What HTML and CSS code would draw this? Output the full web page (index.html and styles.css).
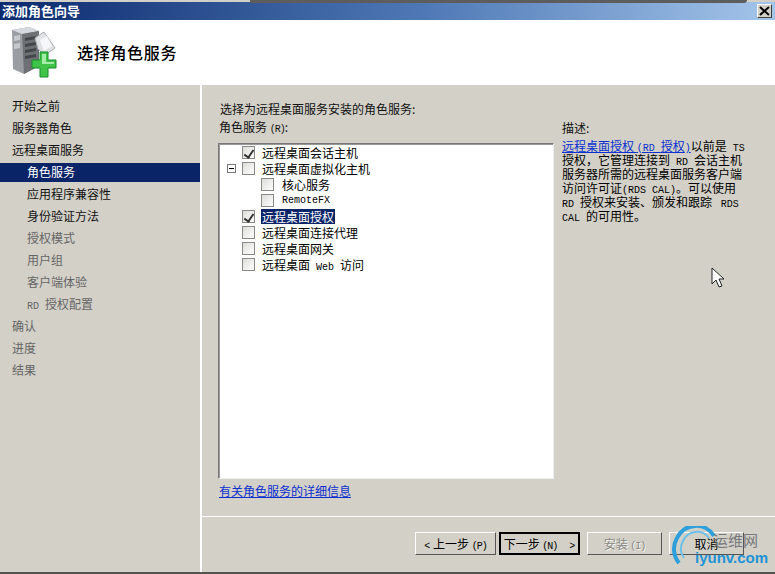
FILE: index.html
```html
<!DOCTYPE html>
<html lang="zh-CN">
<head>
    <meta charset="UTF-8">
    <meta name="viewport" content="width=device-width, initial-scale=1.0">
    <title>添加角色向导</title>
    <link rel="stylesheet" href="styles.css">
</head>
<body>
    <div class="wizard">
        <!-- Title bar -->
        <div class="titlebar">
            <span class="title-text">添加角色向导</span>
            <div class="close-btn">
                <svg width="11" height="10" viewBox="0 0 11 10"><path d="M1 1L10 9M10 1L1 9" stroke="#000" stroke-width="2" fill="none"/></svg>
            </div>
        </div>

        <!-- Header -->
        <div class="header">
            <svg class="header-icon" width="46" height="52" viewBox="0 0 46 52">
                <path d="M0 3L17 0L27 4L27 39L12 47L1 42Z" fill="#9a9da1"/>
                <path d="M0 3L17 0L27 4L10 7Z" fill="#d5d8dc"/>
                <path d="M10 7L27 4L27 39L12 47Z" fill="#6d7074"/>
                <path d="M2 9L8 8V13L2 14ZM2 17L8 16V21L2 22Z" fill="#c7cacd"/>
                <path d="M13 11L24 9V12L13 14ZM13 17L24 15V18L13 20ZM13 23L24 21V24L13 26ZM13 29L24 27V30L13 32Z" fill="#44474a"/>
                <path d="M23 11L32 5L43 21L33 28L26 22Z" fill="#dfe2e5" stroke="#a9adb1" stroke-width="1"/>
                <path d="M28 13L35 9L40 19L32 24Z" fill="#f6f7f8"/>
                <path d="M20 33H28V25H36V33H44V41H36V50H28V41H20Z" fill="#3fc349" stroke="#1a8c2a" stroke-width="1"/>
                <path d="M22 35H30V27H34V35H42V37H30V35Z" fill="#a4eba8"/>
            </svg>
            <h1 class="header-title">选择角色服务</h1>
        </div>

        <div class="main">
            <!-- Step list -->
            <ul class="steps">
                <li>开始之前</li>
                <li>服务器角色</li>
                <li>远程桌面服务</li>
                <li class="sub active">角色服务</li>
                <li class="sub">应用程序兼容性</li>
                <li class="sub">身份验证方法</li>
                <li class="sub off">授权模式</li>
                <li class="sub off">用户组</li>
                <li class="sub off">客户端体验</li>
                <li class="sub off"><span class="lat">RD </span>授权配置</li>
                <li class="off">确认</li>
                <li class="off">进度</li>
                <li class="off">结果</li>
            </ul>

            <div class="panel">
                <div class="panel-body">
                    <div class="left-col">
                        <p class="intro">选择为远程桌面服务安装的角色服务:</p>
                        <p class="label">角色服务 <span class="lat key">(R)</span>:</p>
                        <div class="tree">
                            <div class="row"><span class="check on"></span><span class="name">远程桌面会话主机</span></div>
                            <div class="row"><span class="expander"></span><span class="check"></span><span class="name">远程桌面虚拟化主机</span></div>
                            <div class="row nested"><span class="check"></span><span class="name">核心服务</span></div>
                            <div class="row nested"><span class="check"></span><span class="name lat">RemoteFX</span></div>
                            <div class="row"><span class="check on"></span><span class="name selected">远程桌面授权</span></div>
                            <div class="row"><span class="check"></span><span class="name">远程桌面连接代理</span></div>
                            <div class="row"><span class="check"></span><span class="name">远程桌面网关</span></div>
                            <div class="row"><span class="check"></span><span class="name">远程桌面<span class="lat"> Web </span>访问</span></div>
                        </div>
                        <a class="more-link" href="#">有关角色服务的详细信息</a>
                    </div>
                    <div class="desc">
                        <p class="desc-title">描述:</p>
                        <p class="desc-text"><a href="#">远程桌面授权 <span class="lat">(RD </span>授权<span class="lat">)</span></a>以前是<span class="lat"> TS</span><br>授权&#xFF0C;它管理连接到<span class="lat"> RD </span>会话主机<br>服务器所需的远程桌面服务客户端<br>访问许可证<span class="lat">(RDS CAL)</span>。可以使用<br><span class="lat">RD </span>授权来安装、颁发和跟踪 <span class="lat"> RDS</span><br><span class="lat">CAL </span>的可用性。</p>
                    </div>
                </div>

                <div class="footer">
                    <button class="btn wide"><span class="lat">&lt;</span> 上一步 <span class="lat key">(P)</span></button>
                    <button class="btn wide default">下一步 <span class="lat key">(N)</span><span class="lat">  &gt;</span></button>
                    <button class="btn" disabled>安装 <span class="lat key">(I)</span></button>
                    <button class="btn">取消</button>
                </div>
            </div>
        </div>
        <div class="bottom-edge"></div>
    </div>

    <!-- Things lying over the window -->
    <div class="top-strip"></div>
    <svg class="cursor" width="14" height="22" viewBox="0 0 14 22"><path d="M1 1V17L5 13L8 20L11 19L8 12H13Z" fill="#fff" stroke="#222" stroke-width="1"/></svg>
    <div class="watermark">
        <svg class="wm-arc" width="46" height="46" viewBox="0 0 46 46">
            <path d="M42 10A21 21 0 0 0 5 12A22 22 0 0 0 7 37" fill="none" stroke="#2c9fdc" stroke-width="4"/>
            <path d="M37 12A15 15 0 0 0 11 15A16 16 0 0 0 12 32" fill="none" stroke="#6cc1ea" stroke-width="2"/>
        </svg>
        <span class="wm-cn">运维网</span>
        <span class="wm-en">iyunv.com</span>
    </div>
</body>
</html>
```
FILE: styles.css
```css
* {
    box-sizing: border-box;
}
html, body {
    margin: 0;
    height: 100%;
    overflow: hidden;
}
body {
    position: relative;
    background: #d2d0c7;
    font-family: "Noto Sans CJK SC", sans-serif;
    font-size: 12px;
    color: #111;
}
p, h1, ul {
    margin: 0;
    padding: 0;
}
.lat {
    font-family: "Liberation Mono", monospace;
    font-size: 10px;
    line-height: 8px;
    white-space: pre;
}
.key {
    letter-spacing: -1px;
}
.wizard {
    display: flex;
    flex-direction: column;
    width: 775px;
    height: 574px;
    padding-top: 2px;
    background: #d2d0c7;
}
.titlebar {
    display: flex;
    align-items: center;
    justify-content: space-between;
    height: 18px;
    padding: 0 3px 0 2px;
    background: linear-gradient(to right, #0b2a6e, #4f79b6 55%, #a4c5ea);
    flex: none;
}
.title-text {
    color: #fff;
    font-size: 13px;
    font-weight: 700;
    line-height: 18px;
}
.close-btn {
    display: flex;
    align-items: center;
    justify-content: center;
    width: 15px;
    height: 14px;
    background: #d2d0c7;
    border: 1px solid;
    border-color: #fff #404040 #404040 #fff;
}
.header {
    display: flex;
    align-items: center;
    gap: 19px;
    height: 65px;
    padding-left: 12px;
    background: #fff;
    flex: none;
}
.header-title {
    margin: 0 0 2px;
    font-size: 16px;
    font-weight: 500;
    letter-spacing: .7px;
    color: #000;
}
.main {
    display: flex;
    flex: 1;
    min-height: 0;
}
.steps {
    width: 200px;
    padding-top: 12px;
    list-style: none;
    flex: none;
}
.steps li {
    height: 19px;
    margin-bottom: 3px;
    padding-left: 12px;
    line-height: 17px;
}
.steps .sub {
    padding-left: 27px;
}
.steps .active {
    background: #0a2468;
    color: #fff;
}
.steps .off {
    color: #666;
}
.panel {
    display: flex;
    flex-direction: column;
    flex: 1;
    border-left: 2px solid #fff;
}
.panel-body {
    display: flex;
    flex: 1;
    padding: 15px 0 0 16px;
    border-bottom: 1px solid #fff;
}
.left-col {
    width: 336px;
    flex: none;
}
.intro, .desc-title {
    line-height: 17px;
    padding-left: 2px;
}
.intro {
    height: 19px;
}
.label {
    height: 24px;
    padding-left: 1px;
    line-height: 15px;
}
.tree {
    height: 336px;
    background: #fff;
    border: 1px solid;
    border-color: #777 #eee #eee #777;
    box-shadow: inset 1px 1px 0 #999;
}
.row {
    display: flex;
    align-items: center;
    height: 16px;
    padding-left: 23px;
    position: relative;
}
.row.nested {
    padding-left: 42px;
}
.check {
    width: 13px;
    height: 13px;
    margin-right: 6px;
    background: linear-gradient(135deg, #dcdcd8, #fff);
    border: 1px solid #8a8a86;
    flex: none;
    position: relative;
}
.check.on::after {
    content: "";
    position: absolute;
    left: 3px;
    top: 1px;
    width: 4px;
    height: 8px;
    border: solid #333;
    border-width: 0 2px 2px 0;
    transform: rotate(35deg);
}
.name {
    padding: 0 1px;
    line-height: 15px;
    white-space: nowrap;
    color: #000;
}
.nested .name {
    padding-left: 2px;
}
.selected {
    background: #0a2468;
    color: #fff;
}
.expander {
    position: absolute;
    left: 8px;
    top: 4px;
    width: 9px;
    height: 9px;
    border: 1px solid #777;
    background: #fff;
}
.expander::after {
    content: "";
    position: absolute;
    left: 1px;
    top: 3px;
    width: 5px;
    height: 1px;
    background: #000;
}
.more-link {
    display: block;
    margin-top: 4px;
    padding-left: 1px;
    line-height: 16px;
}
a {
    color: #0a2fd0;
    text-decoration: underline;
}
.desc {
    width: 200px;
    margin-left: 8px;
    padding-top: 19px;
}
.desc-title {
    height: 20px;
    padding-left: 0;
}
.desc-text {
    line-height: 13.8px;
    white-space: nowrap;
    color: #000;
}
.footer {
    display: flex;
    align-items: flex-start;
    gap: 3px;
    height: 55px;
    padding: 15px 0 0 213px;
    flex: none;
}
.btn {
    width: 75px;
    height: 23px;
    margin-left: 4px;
    padding: 0;
    font: inherit;
    color: #000;
    background: #d2d0c7;
    border: 1px solid;
    border-color: #fff #555 #555 #fff;
}
.btn.wide {
    width: 81px;
    margin-left: 0;
}
.btn.default {
    border: 2px solid #000;
}
.btn:disabled {
    color: #8a8a84;
    text-shadow: 1px 1px 0 #f4f4f0;
}
.bottom-edge {
    height: 2px;
    background: #55554f;
    flex: none;
}
.top-strip {
    position: absolute;
    left: 250px;
    top: 0;
    width: 497px;
    height: 3px;
    background: #5d5d5d;
    border-radius: 0 0 3px 0;
}
.cursor {
    position: absolute;
    left: 711px;
    top: 267px;
}
.watermark {
    position: absolute;
    left: 672px;
    top: 526px;
    width: 103px;
    height: 46px;
}
.wm-arc {
    position: absolute;
    left: 0;
    top: 0;
}
.wm-cn {
    position: absolute;
    left: 41px;
    top: 5px;
    font-size: 15px;
    line-height: 18px;
    color: #77797c;
}
.wm-en {
    position: absolute;
    left: 23px;
    top: 22px;
    font-family: "Liberation Sans", sans-serif;
    font-size: 15px;
    font-weight: 700;
    line-height: 20px;
    color: #1f93d6;
}
```
